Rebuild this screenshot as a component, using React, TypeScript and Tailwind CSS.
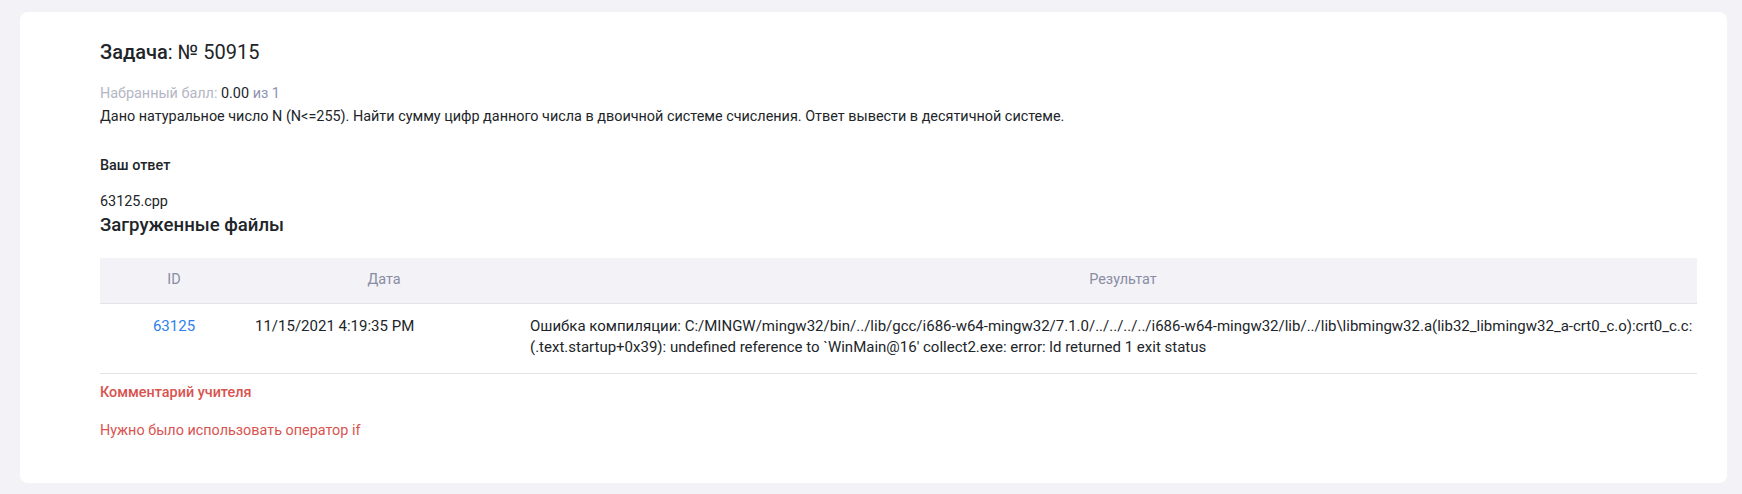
import React from 'react';

const font = { fontFamily: 'Roboto, "Noto Sans", sans-serif' };

const errorText =
  "Ошибка компиляции: C:/MINGW/mingw32/bin/../lib/gcc/i686-w64-mingw32/7.1.0/../../../../i686-w64-mingw32/lib/../lib\\libmingw32.a(lib32_libmingw32_a-crt0_c.o):crt0_c.c: (.text.startup+0x39): undefined reference to `WinMain@16' collect2.exe: error: ld returned 1 exit status";

export default function App() {
  return (
    <div className="min-h-[494px] bg-[#f2f2f7] pt-[12px] pb-[12px] pl-[20px] pr-[15px]" style={font}>
      <div className="bg-white rounded-lg pl-[80px] pr-[30px] pt-[26px] pb-[42px] text-[#212529]">
        <h1 className="text-[20px] leading-[28px]">
          <span className="font-medium">Задача</span>: № 50915
        </h1>

        <div className="mt-[16px] text-[14.4px] leading-[23px]">
          <div>
            <span className="text-[#b4b6c4]">Набранный балл:</span> 0.00{' '}
            <span className="text-[#8f93b4]">из 1</span>
          </div>
          <div>
            Дано натуральное число N (N&lt;=255). Найти сумму цифр данного числа в двоичной системе счисления. Ответ вывести в десятичной системе.
          </div>
        </div>

        <div className="mt-[28px] text-[14.4px] leading-[20px] font-medium">Ваш ответ</div>

        <div className="mt-[16px] text-[14.4px] leading-[20px]">63125.cpp</div>
        <h2 className="text-[18.6px] leading-[26px] font-medium">Загруженные файлы</h2>

        <table className="mt-[20px] w-full border-collapse text-[15px]">
          <thead>
            <tr className="bg-[#f2f2f7] text-[#8a8ca3] h-[45px] border-b border-[#e3e3e8] text-[14.4px]">
              <th className="w-[148px] font-normal text-center">ID</th>
              <th className="w-[272px] font-normal text-center">Дата</th>
              <th className="font-normal text-center pl-[29px]">Результат</th>
            </tr>
          </thead>
          <tbody>
            <tr className="border-b border-[#e3e3e8] align-top">
              <td className="text-center pt-[12px] pb-[15px] leading-[20px] text-[#2f80ed]">63125</td>
              <td className="pl-[7px] pt-[12px] pb-[15px] leading-[20px]">11/15/2021 4:19:35 PM</td>
              <td className="pl-[10px] pt-[12px] pb-[15px] leading-[21px] pr-[2px]">{errorText}</td>
            </tr>
          </tbody>
        </table>

        <div className="mt-[9px] text-[14.4px] leading-[20px] font-medium text-[#d9534f]">Комментарий учителя</div>
        <div className="mt-[18px] text-[14.4px] leading-[20px] text-[#d9534f]">Нужно было использовать оператор if</div>
      </div>
    </div>
  );
}
